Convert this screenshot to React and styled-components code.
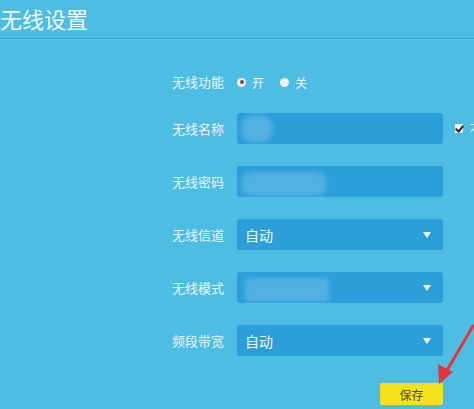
import React from 'react';
import styled, { createGlobalStyle } from 'styled-components';

const Global = createGlobalStyle`
    html, body {
        margin: 0;
        padding: 0;
        background: #4dbde3;
        overflow: hidden;
    }
    body {
        font-family: "Noto Sans CJK SC", "Liberation Sans", sans-serif;
    }
`;

const Page = styled.div`
    position: relative;
    width: 474px;
    height: 409px;
    background: #4dbde3;
    overflow: hidden;
`;

const Header = styled.div`
    height: 38px;
    border-bottom: 1px solid #36a4d0;
    box-shadow: 0 1px 0 #5cc6e9;
    display: flex;
    align-items: center;
`;

const Title = styled.h1`
    margin: 0;
    font-size: 22px;
    font-weight: 400;
    color: #f2fafd;
    line-height: 1;
    margin-top: -3px;
`;

const Form = styled.div`
    display: grid;
    grid-template-columns: 65px 206px auto;
    row-gap: 22px;
    padding-left: 172px;
    padding-top: 34px;
    align-items: center;
`;

const Label = styled.div`
    font-size: 13px;
    color: #eaf6fb;
    white-space: nowrap;
    line-height: ${p => p.h || 31}px;
`;

const Radios = styled.div`
    display: flex;
    align-items: center;
    height: 22px;
`;

const RadioItem = styled.label`
    display: flex;
    align-items: center;
    gap: 6px;
    font-size: 12px;
    color: #f2fafd;
    margin-right: 16px;
`;

const Dot = styled.span`
    width: 9px;
    height: 9px;
    border-radius: 50%;
    background: #f3eef0;
    display: flex;
    align-items: center;
    justify-content: center;
    &::after {
        content: '';
        width: 4px;
        height: 4px;
        border-radius: 50%;
        background: ${p => (p.on ? '#7a4a50' : 'transparent')};
    }
`;

const Field = styled.div`
    position: relative;
    height: 31px;
    background: #2c9fd9;
    border-radius: 3px;
    display: flex;
    align-items: center;
    justify-content: space-between;
    padding: 0 12px 0 8px;
    box-sizing: border-box;
    overflow: hidden;
`;

const Value = styled.span`
    font-size: 14px;
    color: #f4fbfe;
`;

const Arrow = styled.span`
    width: 0;
    height: 0;
    border-left: 4px solid transparent;
    border-right: 4px solid transparent;
    border-top: 6px solid #f4fbfe;
`;

const Smudge = styled.div`
    position: absolute;
    left: ${p => p.x}px;
    top: ${p => p.y}px;
    width: ${p => p.w}px;
    height: ${p => p.h}px;
    border-radius: ${p => p.r || 14}px;
    background: #52b0e3;
    filter: blur(2px);
`;

const Side = styled.div`
    display: flex;
    align-items: center;
    gap: 7px;
    padding-left: 12px;
    font-size: 12px;
    color: #f2fafd;
    white-space: nowrap;
`;

const Check = styled.span`
    width: 8px;
    height: 9px;
    background: #f3f1f4;
    border-radius: 1px;
    position: relative;
    &::after {
        content: '';
        position: absolute;
        left: 2px;
        top: 0px;
        width: 3px;
        height: 6px;
        border: solid #3a1c24;
        border-width: 0 2px 2px 0;
        transform: rotate(40deg);
    }
`;

const Footer = styled.div`
    grid-column: 2;
    display: flex;
    justify-content: flex-end;
    margin-top: 5px;
`;

const SaveButton = styled.button`
    width: 63px;
    height: 22px;
    border: none;
    border-radius: 2px;
    background: #f6e21c;
    color: #4a4a30;
    font-family: inherit;
    font-size: 12px;
    padding: 0;
`;

const Pointer = styled.svg`
    position: absolute;
    left: 426px;
    top: 320px;
`;

const Select = ({ value, children }) => (
    <Field>
        <Value>{value}</Value>
        {children}
        <Arrow />
    </Field>
);

export default function App() {
    return (
        <Page>
            <Global />
            <Header>
                <Title>无线设置</Title>
            </Header>
            <Form>
                <Label h={22} style={{ marginTop: -2, marginBottom: -2 }}>无线功能</Label>
                <Radios style={{ marginTop: -2, marginBottom: -2 }}>
                    <RadioItem><Dot on />开</RadioItem>
                    <RadioItem><Dot />关</RadioItem>
                </Radios>
                <div />

                <Label>无线名称</Label>
                <Field>
                    <Smudge x={4} y={2} w={32} h={28} r={16} />
                </Field>
                <Side><Check />不广播</Side>

                <Label>无线密码</Label>
                <Field>
                    <Smudge x={4} y={6} w={86} h={24} r={12} />
                </Field>
                <div />

                <Label>无线信道</Label>
                <Select value="自动" />
                <div />

                <Label>无线模式</Label>
                <Select value="">
                    <Smudge x={8} y={6} w={84} h={24} r={4} />
                </Select>
                <div />

                <Label>频段带宽</Label>
                <Select value="自动" />
                <div />

                <div />
                <Footer>
                    <SaveButton>保存</SaveButton>
                </Footer>
            </Form>
            <Pointer width="48" height="70" viewBox="0 0 48 70">
                <line x1="47" y1="6" x2="20" y2="52" stroke="#e2363c" strokeWidth="3" strokeLinecap="round" />
                <polygon points="13,64 12,44 27,52" fill="#e2363c" />
            </Pointer>
        </Page>
    );
}
